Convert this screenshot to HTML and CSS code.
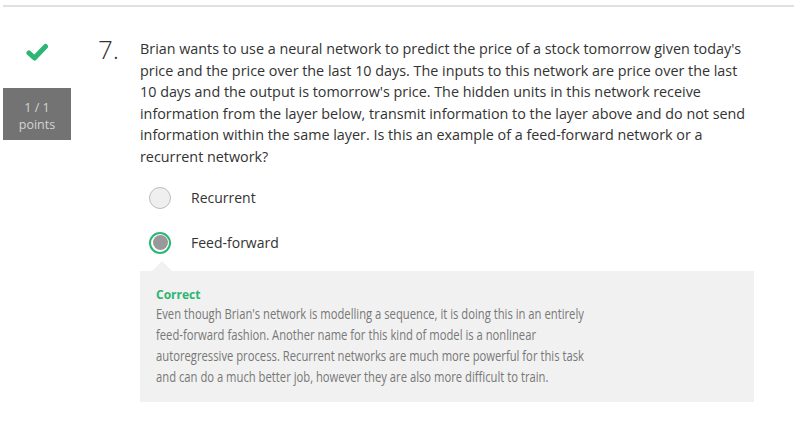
FILE: index.html
```html
<!DOCTYPE html>
<html>
<head>
<meta charset="utf-8">
<link rel="stylesheet" href="styles.css">
</head>
<body>
<div class="page">
  <div class="rule"></div>
  <div class="question">
    <div class="side">
      <svg class="check" width="22" height="18" viewBox="0 0 22 18"><path d="M3 10 L8.5 15 L19.5 3.5" fill="none" stroke="#2bb673" stroke-width="5" stroke-linecap="round" stroke-linejoin="round"/></svg>
      <div class="points"><div>1 / 1</div><div>points</div></div>
    </div>
    <div class="num">7.</div>
    <div class="body">
      <p class="prompt">Brian wants to use a neural network to predict the price of a stock tomorrow given today's<br>price and the price over the last 10 days. The inputs to this network are price over the last<br>10 days and the output is tomorrow's price. The hidden units in this network receive<br>information from the layer below, transmit information to the layer above and do not send<br>information within the same layer. Is this an example of a feed-forward network or a<br>recurrent network?</p>
      <div class="options">
        <div class="option"><span class="radio"></span><span class="label">Recurrent</span></div>
        <div class="option"><span class="radio checked"><span class="dot"></span></span><span class="label">Feed-forward</span></div>
      </div>
      <div class="feedback">
        <div class="status">Correct</div>
        <div class="explain"><span>Even though Brian's network is modelling a sequence, it is doing this in an entirely<br>feed-forward fashion. Another name for this kind of model is a nonlinear<br>autoregressive process. Recurrent networks are much more powerful for this task<br>and can do a much better job, however they are also more difficult to train.</span></div>
      </div>
    </div>
  </div>
</div>
</body>
</html>
```
FILE: styles.css
```css
html, body { margin: 0; padding: 0; background: #fff; }
body { font-family: "Open Sans", "Noto Sans", sans-serif; color: #333; width: 797px; height: 443px; overflow: hidden; }
.page { padding: 5px 3px 0 3px; }
.rule { height: 2px; background: #e0e0e0; }
.question { display: flex; padding-top: 27px; }
.side { width: 69px; flex: none; display: flex; flex-direction: column; align-items: center; }
.check { margin-top: 9px; margin-left: -2px; }
.points { margin-top: 27px; margin-left: -1px; width: 68px; height: 52px; box-sizing: border-box; padding-top: 3px; background: #737373; color: #d4d4d4; font-size: 12.5px; line-height: 17px; text-align: center; display: flex; flex-direction: column; justify-content: center; align-items: center; }
.num { width: 68px; flex: none; font-size: 26px; line-height: 30px; color: #333; font-weight: 300; padding-left: 26px; box-sizing: border-box; }
.body { width: 614px; flex: none; }
.prompt { margin: 0; font-size: 14.35px; line-height: 21.6px; color: #333; padding-top: 4px; white-space: nowrap; }
.options { margin-top: 19px; display: flex; flex-direction: column; gap: 23px; }
.option { display: flex; align-items: center; height: 22px; }
.radio { width: 20px; height: 20px; border-radius: 50%; border: 1px solid #bcbcbc; background: #efefef; box-sizing: content-box; margin-left: 9px; display: flex; align-items: center; justify-content: center; }
.radio.checked { width: 18px; height: 18px; border: 2.5px solid #2bb673; background: #fff; }
.dot { width: 15px; height: 15px; border-radius: 50%; background: #999; }
.label { margin-left: 20px; font-size: 14px; color: #333; }
.feedback { position: relative; margin-top: 17px; background: #f1f1f1; width: 614px; height: 131px; box-sizing: border-box; padding: 16px 16px 0; }
.feedback::before { content: ""; position: absolute; left: 12px; top: -10px; border-left: 10px solid transparent; border-right: 10px solid transparent; border-bottom: 10px solid #f1f1f1; }
.status { color: #2bb673; font-weight: 700; font-size: 12px; line-height: 16px; }
.explain { font-size: 14px; line-height: 21.3px; color: #777; margin-top: 0; white-space: nowrap; }
.explain span { display: inline-block; transform: scaleX(0.803); transform-origin: left top; }
```
